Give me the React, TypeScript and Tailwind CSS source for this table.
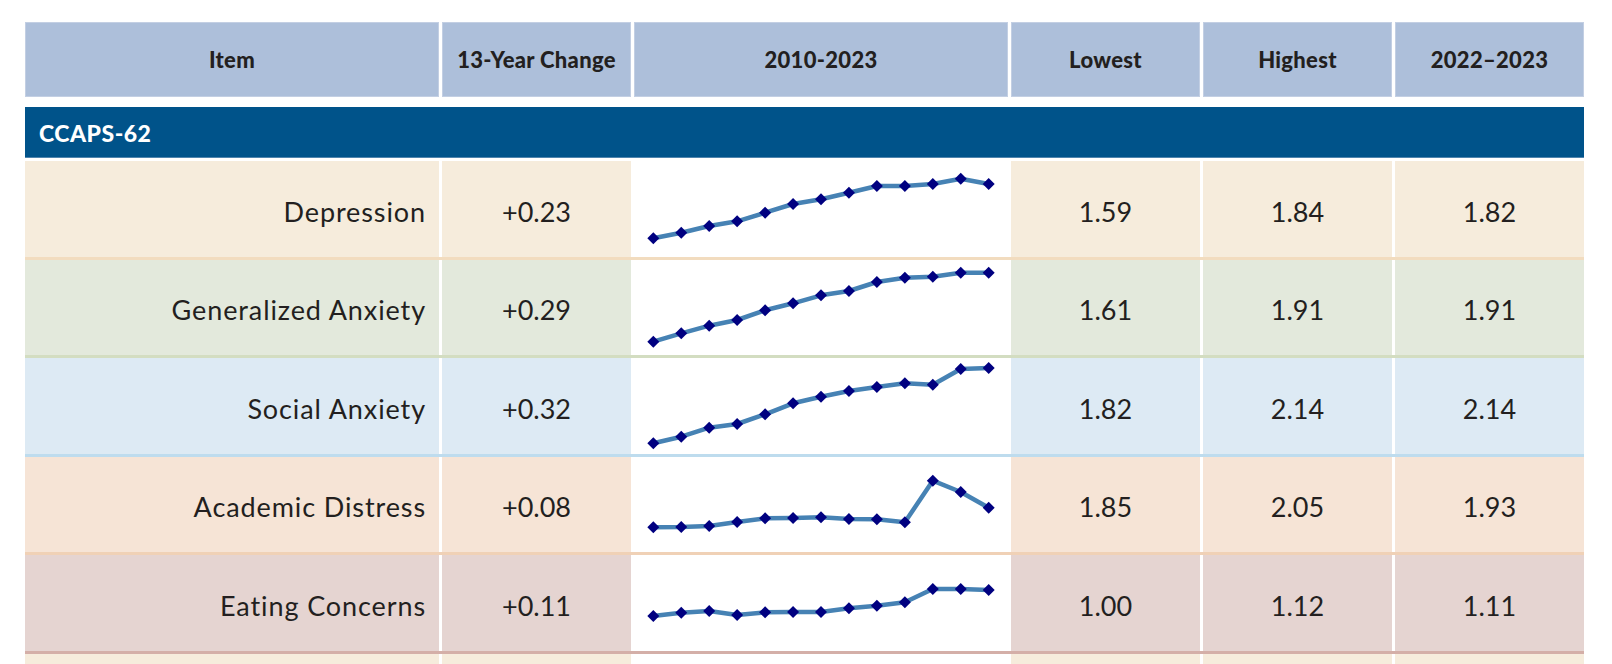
import * as React from "react";

interface Row {
  name: string;
  change: string;
  low: string;
  high: string;
  last: string;
  bg: string;
  line: string;
  height: string;
  inner: number;
  ys: number[];
}

const rows: Row[] = [
  {
    name: "Depression",
    change: "+0.23",
    low: "1.59",
    high: "1.84",
    last: "1.82",
    bg: "bg-[#f6ecdc]",
    line: "border-[#f2dcbf]",
    height: "h-[99px]",
    inner: 96,
    ys: [77.3, 71.7, 65, 60.3, 51.7, 43, 38.3, 31.7, 25, 25, 23, 17.7, 23],
  },
  {
    name: "Generalized Anxiety",
    change: "+0.29",
    low: "1.61",
    high: "1.91",
    last: "1.91",
    bg: "bg-[#e3e9dc]",
    line: "border-[#d3ddc1]",
    height: "h-[98px]",
    inner: 95,
    ys: [81.7, 73.3, 65.7, 60, 50.3, 43.3, 35.3, 31, 22, 17.7, 16.7, 12.7, 12.7],
  },
  {
    name: "Social Anxiety",
    change: "+0.32",
    low: "1.82",
    high: "2.14",
    last: "2.14",
    bg: "bg-[#ddeaf4]",
    line: "border-[#bedcee]",
    height: "h-[99px]",
    inner: 96,
    ys: [85.3, 78.7, 69.7, 66, 56.3, 45.3, 38.7, 33, 29, 25.3, 26.7, 11, 10],
  },
  {
    name: "Academic Distress",
    change: "+0.08",
    low: "1.85",
    high: "2.05",
    last: "1.93",
    bg: "bg-[#f6e4d6]",
    line: "border-[#f0d1b6]",
    height: "h-[98px]",
    inner: 95,
    ys: [70.3, 70, 69, 65, 61.3, 61, 60.3, 62, 62.3, 65.3, 23.7, 35, 50.7],
  },
  {
    name: "Eating Concerns",
    change: "+0.11",
    low: "1.00",
    high: "1.12",
    last: "1.11",
    bg: "bg-[#e5d4d1]",
    line: "border-[#d4afa8]",
    height: "h-[99px]",
    inner: 96,
    ys: [61, 57.7, 56, 60, 57.3, 57, 57, 53.3, 50.7, 47.3, 34, 34, 35],
  },
];

// sparkline drawn in the white 2010-2023 column
const Spark = ({ ys, h }: { ys: number[]; h: number }) => {
  const pts = ys.map((y, i) => [19.3 + i * 27.95, y]);
  return (
    <svg width="374" height={h} className="block">
      <polyline
        points={pts.map((p) => p.join(",")).join(" ")}
        fill="none"
        stroke="#4682b4"
        strokeWidth="4.5"
        strokeLinejoin="round"
      />
      {pts.map(([x, y], i) => (
        <polygon
          key={i}
          points={`${x},${y - 6} ${x + 6},${y} ${x},${y + 6} ${x - 6},${y}`}
          fill="#000080"
        />
      ))}
    </svg>
  );
};

const Head = ({ w, children }: { w: string; children: React.ReactNode }) => (
  <div
    className={`${w} flex items-center justify-center bg-[#adbfda] border border-[#c3cfe3] text-[22px] font-black tracking-[0.3px] text-[#231f20]`}
  >
    {children}
  </div>
);

const cell = "flex items-center pt-[6px] text-[27px] text-[#231f20]";

const App = () => {
  return (
    <div
      className="w-[1612px] h-[664px] overflow-hidden bg-white pt-[22px] pl-[25px]"
      style={{ fontFamily: "Lato, 'Liberation Sans', sans-serif" }}
    >
      <div className="w-[1559px]">
        <div className="flex gap-[3px] h-[75px]">
          <Head w="w-[414px]">Item</Head>
          <Head w="w-[189px]">13-Year Change</Head>
          <Head w="w-[374px]">2010-2023</Head>
          <Head w="w-[189px]">Lowest</Head>
          <Head w="w-[189px]">Highest</Head>
          <Head w="w-[189px]">2022–2023</Head>
        </div>

        <div className="mt-[10px] h-[51px] bg-[#00538a] border-b border-[#4f84ad] flex items-center pl-[14px] pt-[3px] text-[23px] font-black tracking-[0.5px] text-white">
          CCAPS-62
        </div>

        <div className="mt-[3px]">
          {rows.map((r) => (
            <div key={r.name} className={`flex gap-[3px] ${r.height} border-b-[3px] ${r.line}`}>
              <div className={`w-[414px] ${r.bg} ${cell} justify-end pr-[13px] tracking-[0.9px]`}>
                {r.name}
              </div>
              <div className={`w-[189px] ${r.bg} ${cell} justify-center`}>{r.change}</div>
              <div className="w-[374px] bg-white">
                <Spark ys={r.ys} h={r.inner} />
              </div>
              {[r.low, r.high, r.last].map((v, i) => (
                <div key={i} className={`w-[189px] ${r.bg} ${cell} justify-center`}>
                  {v}
                </div>
              ))}
            </div>
          ))}
          <div className="flex gap-[3px] h-[96px]">
            <div className="w-[414px] bg-[#f6ecdc]" />
            <div className="w-[189px] bg-[#f6ecdc]" />
            <div className="w-[374px] bg-white" />
            <div className="w-[189px] bg-[#f6ecdc]" />
            <div className="w-[189px] bg-[#f6ecdc]" />
            <div className="w-[189px] bg-[#f6ecdc]" />
          </div>
        </div>
      </div>
    </div>
  );
};

export default App;
